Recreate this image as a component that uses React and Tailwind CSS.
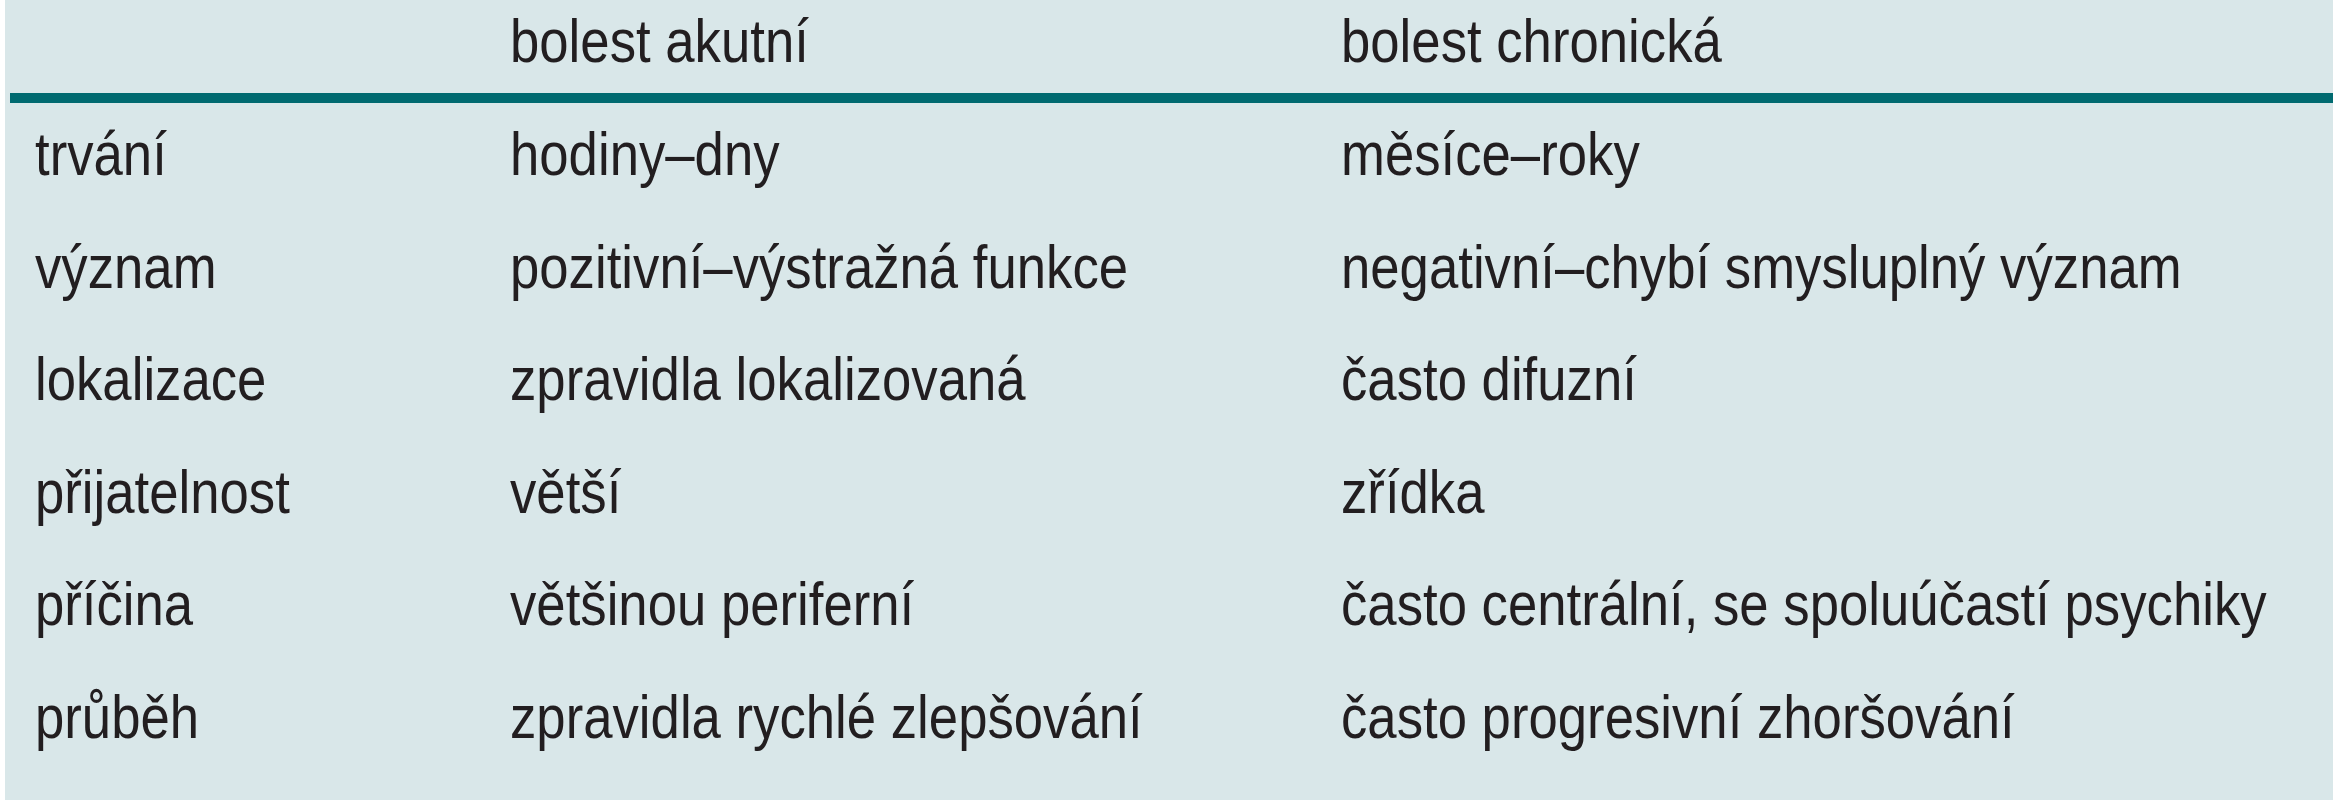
const header = ['', 'bolest akutní', 'bolest chronická'];

const rows = [
  ['trvání', 'hodiny–dny', 'měsíce–roky'],
  ['význam', 'pozitivní–výstražná funkce', 'negativní–chybí smysluplný význam'],
  ['lokalizace', 'zpravidla lokalizovaná', 'často difuzní'],
  ['přijatelnost', 'větší', 'zřídka'],
  ['příčina', 'většinou periferní', 'často centrální, se spoluúčastí psychiky'],
  ['průběh', 'zpravidla rychlé zlepšování', 'často progresivní zhoršování'],
];

const cols = 'grid grid-cols-[475px_831px_1fr] pl-[30px]';

// the printed face is a condensed grotesque; squeeze Liberation Sans to match
const Cell = ({ children }) => (
  <div>
    <span className="inline-block origin-left scale-x-[0.85]">{children}</span>
  </div>
);

export default function App() {
  return (
    <div className="h-[800px] w-full bg-white pl-[5px] overflow-hidden">
      <div className="h-full bg-[#d9e7e9] text-[#221e20] text-[62px] whitespace-nowrap font-['Liberation_Sans',Arial,sans-serif]">
        <div className={`${cols} leading-[81px] h-[93px]`}>
          {header.map((h, i) => (
            <Cell key={i}>{h}</Cell>
          ))}
        </div>
        <div className="ml-[5px] h-[10px] bg-[#006a70]" />
        <div>
          {rows.map((r, i) => (
            <div key={i} className={`${cols} leading-[101px] pb-[11.5px]`}>
              {r.map((c, j) => (
                <Cell key={j}>{c}</Cell>
              ))}
            </div>
          ))}
        </div>
      </div>
    </div>
  );
}
